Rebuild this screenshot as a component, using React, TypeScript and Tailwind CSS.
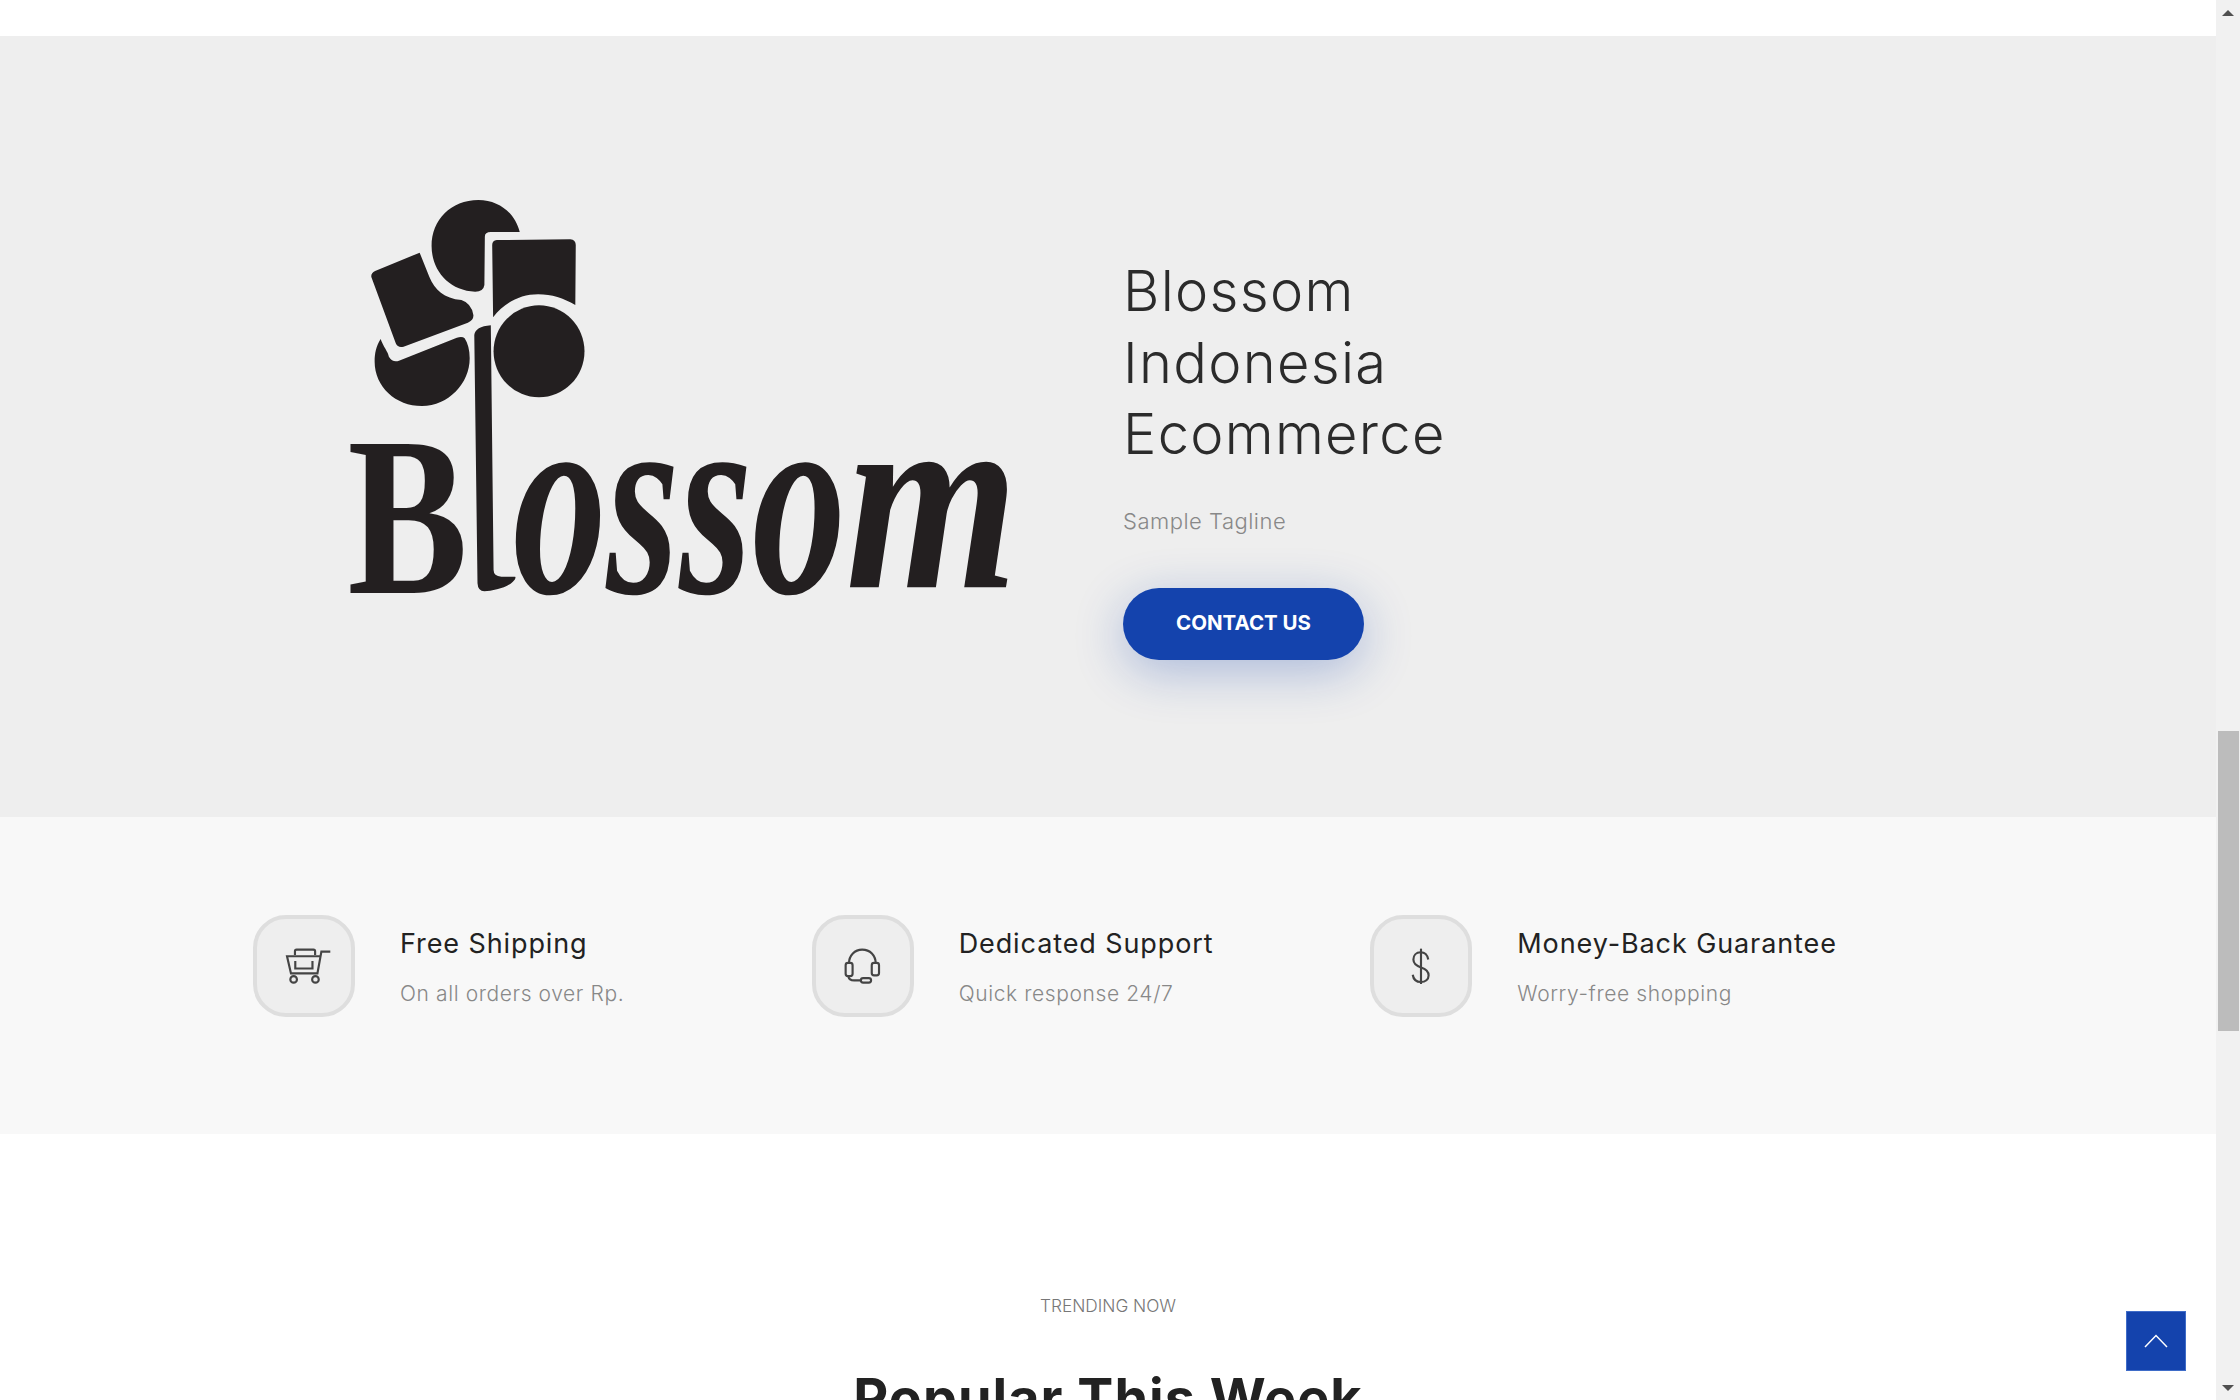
function LogoText({ x, w, text, italic, size, y = 1268 }: { x: number; w: number; text: string; italic?: boolean; size: number; y?: number }) {
  return (
    <text
      x={x}
      y={y}
      textLength={w}
      lengthAdjust="spacingAndGlyphs"
      fontFamily="'Liberation Serif', serif"
      fontWeight={700}
      fontStyle={italic ? 'italic' : 'normal'}
      fontSize={size}
      fill="#231f20"
    >
      {text}
    </text>
  );
}

function Logo() {
  return (
    <svg viewBox="0 0 1568 1320" preserveAspectRatio="none" className="w-[720px] h-[440px] shrink-0" role="img" aria-label="Blossom">
      <g fill="#231f20">
        <path d="M435 186 L372 186 Q359 186 359 200 L358 345 Q356 365 338 365 C280 362 243 300 243 228 C243 150 285 90 345 90 C390 90 425 130 435 186 Z" />
        <path d="M385 210 L545 208 Q557 210 557 225 L556 405 C530 385 505 373 475 373 C435 373 400 400 377 442 L375 225 Q375 212 385 210 Z" />
        <path d="M217 248 L120 303 Q110 310 112 322 L165 520 Q170 535 182 530 L322 458 Q335 450 334 435 Q330 400 308 390 C270 385 250 360 238 320 Z" />
        <path d="M132 507 C122 530 119 550 119 575 C119 650 165 708 222 708 C280 708 326 640 326 565 C326 540 322 520 315 505 Q310 498 298 503 L172 572 Q158 578 150 560 C148 545 138 530 132 507 Z" />
        <ellipse cx="477" cy="544" rx="99" ry="138" />
        <path d="M372 466 L378 1200 Q378 1218 395 1220 L425 1220 Q428 1225 420 1235 C405 1255 375 1262 358 1264 Q344 1264 343 1240 L336 495 Q338 470 372 466 Z" />
      </g>
      <LogoText x={60} w={262} text="B" size={678} />
      <LogoText x={420} w={725} text="osso" italic size={830} />
      <LogoText x={1145} w={375} text="m" italic size={800} y={1252} />
    </svg>
  );
}

function CartIcon() {
  return (
    <svg viewBox="165 170 140 115" className="w-[47px] h-[38px] ml-[8px]" fill="none" stroke="#444" strokeWidth="6.5">
      <path d="M301 184 H274 L262 250 H182 L170 198 H270" />
      <path d="M195 212 V235 H247 V212" />
      <path d="M194 194 V183 Q194 178 199 178 H250 Q255 178 255 183 V194" />
      <circle cx="190" cy="268" r="10" />
      <circle cx="256" cy="268" r="10" />
    </svg>
  );
}

function HeadsetIcon() {
  return (
    <svg viewBox="160 170 118 115" className="w-[39px] h-[38px]" fill="none" stroke="#444" strokeWidth="6.5">
      <path d="M178 220 C178 195 196 178 218 178 C242 178 259 195 259 220" />
      <rect x="168" y="218" width="21" height="40" rx="7" />
      <rect x="247" y="218" width="22" height="38" rx="7" />
      <path d="M176 258 Q178 271 194 271 H214" />
      <rect x="214" y="264" width="31" height="14" rx="7" />
    </svg>
  );
}

function DollarIcon() {
  return (
    <svg viewBox="180 170 66 118" className="w-[22px] h-[39px]" fill="none" stroke="#444" strokeWidth="6.5">
      <path d="M235 208 C232 192 222 186 212 186 C198 186 190 196 190 208 C190 222 202 228 213 232 C226 236 236 242 236 256 C236 268 226 276 213 276 C200 276 190 268 188 254" />
      <path d="M213 175 V282" />
    </svg>
  );
}

function Feature({ icon, title, sub }: { icon: React.ReactNode; title: string; sub: string }) {
  return (
    <div className="w-[558.67px] flex items-center gap-[45px]">
      <div className="w-[102px] h-[102px] shrink-0 rounded-[33px] border-4 border-[#dedede] bg-[#eeeeee] flex items-center justify-center">
        {icon}
      </div>
      <div className="flex flex-col">
        <div className="text-[27px] leading-[36px] tracking-[0.9px] font-normal text-[#222222]">{title}</div>
        <div className="mt-[19px] text-[21px] leading-[26px] tracking-[0.6px] font-light text-[#888888]">{sub}</div>
      </div>
    </div>
  );
}

export default function App() {
  return (
    <div className="flex w-[2240px] h-[1400px] overflow-hidden bg-white font-['Inter',sans-serif]">
      <main className="relative flex-1 min-w-0 flex flex-col">
        <div className="h-9 shrink-0 bg-white" />
        <section className="h-[781px] shrink-0 bg-[#eeeeee] flex pl-[320px] pt-[134px]">
          <Logo />
          <div className="ml-[83px] pt-[86px] flex flex-col items-start">
            <h1 className="text-[56px] leading-[71.5px] tracking-[1.3px] font-light text-[#2b2b2b]">
              Blossom
              <br />
              Indonesia
              <br />
              Ecommerce
            </h1>
            <p className="mt-[35px] text-[22px] leading-[30px] tracking-[0.5px] font-light text-[#888888]">Sample Tagline</p>
            <a className="mt-[52px] w-[241px] h-[72px] rounded-full bg-[#1443ad] text-white text-[20.5px] font-bold flex items-center justify-center shadow-[0_12px_50px_rgba(20,67,173,0.3)]">
              CONTACT US
            </a>
          </div>
        </section>
        <section className="h-[317px] shrink-0 bg-[#f8f8f8] flex items-start pl-[253px] pt-[98px]">
          <Feature icon={<CartIcon />} title="Free Shipping" sub="On all orders over Rp." />
          <Feature icon={<HeadsetIcon />} title="Dedicated Support" sub="Quick response 24/7" />
          <Feature icon={<DollarIcon />} title="Money-Back Guarantee" sub="Worry-free shopping" />
        </section>
        <section className="flex-1 bg-white flex flex-col items-center pt-[159px]">
          <div className="text-[17.3px] leading-[26px] font-light text-[#777777] uppercase">Trending Now</div>
          <h2 className="mt-[49px] text-[54px] leading-[60px] tracking-[1px] font-bold text-[#222222] whitespace-nowrap">Popular This Week</h2>
        </section>
        <a className="absolute right-[30px] bottom-[29px] w-[60px] h-[60px] bg-[#1443ad] border border-[#3f6cc8] flex items-center justify-center">
          <svg viewBox="0 0 24 14" className="w-[24px] h-[14px]" fill="none" stroke="white" strokeWidth="1.5">
            <path d="M1 13 L12 1.5 L23 13" />
          </svg>
        </a>
      </main>
      <aside className="w-6 shrink-0 h-full bg-[#f1f1f1] flex flex-col items-center">
        <div className="mt-[10px] w-0 h-0 border-x-[6px] border-x-transparent border-b-[6px] border-b-[#505050]" />
        <div className="mt-[715px] w-[21px] h-[300px] bg-[#bcbcbc]" />
        <div className="mt-[354px] w-0 h-0 border-x-[6px] border-x-transparent border-t-[6px] border-t-[#505050]" />
      </aside>
    </div>
  );
}
